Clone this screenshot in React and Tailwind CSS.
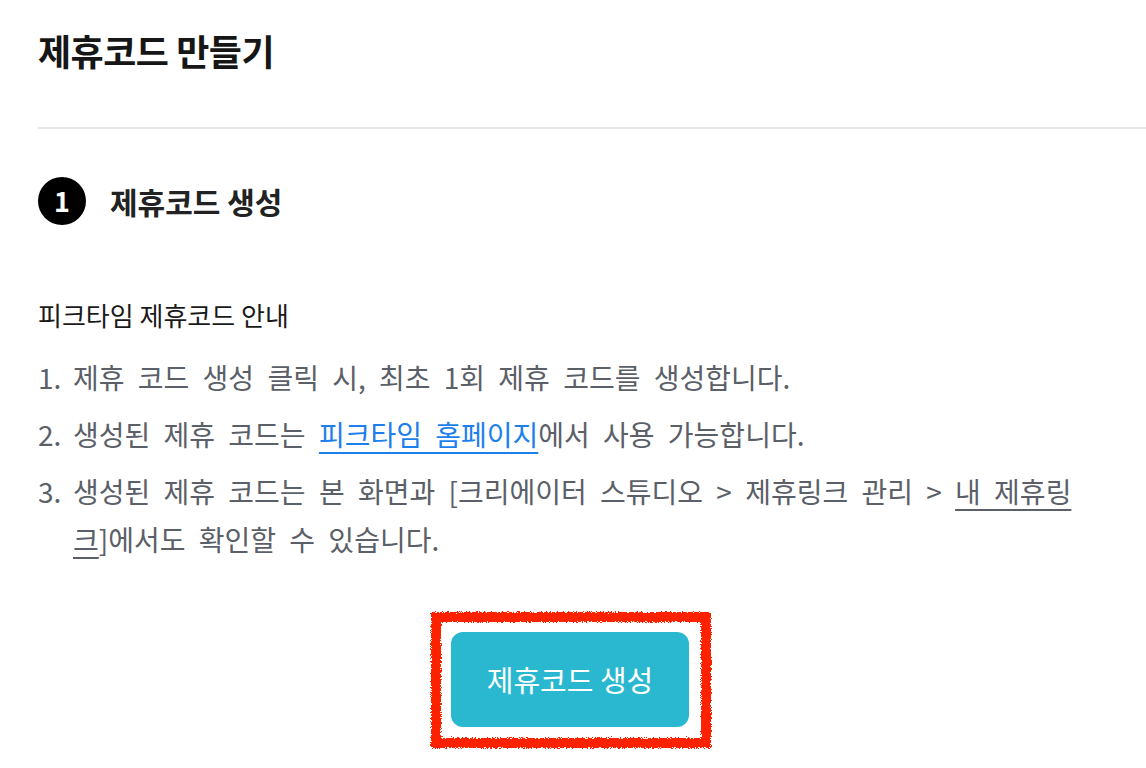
import React from "react";

const FONT = { fontFamily: '"Noto Sans CJK KR", "Noto Sans", sans-serif' };

const GUIDE = [
  {
    n: "1.",
    body: <>제휴 코드 생성 클릭 시, 최초 1회 제휴 코드를 생성합니다.</>,
  },
  {
    n: "2.",
    body: (
      <>
        생성된 제휴 코드는{" "}
        <a href="#" className="text-[#1c7fec] underline decoration-2 underline-offset-[6px]">
          피크타임 홈페이지
        </a>
        에서 사용 가능합니다.
      </>
    ),
  },
  {
    n: "3.",
    body: (
      <>
        생성된 제휴 코드는 본 화면과 [크리에이터 스튜디오 &gt; 제휴링크 관리 &gt;{" "}
        <a href="#" className="underline decoration-2 underline-offset-[6px]">
          내 제휴링
          <br />크
        </a>
        ]에서도 확인할 수 있습니다.
      </>
    ),
  },
];

// 손으로 그린 듯한 빨간 테두리
function ScribbleFrame() {
  return (
    <svg
      className="pointer-events-none absolute -left-[21px] -top-[21px]"
      width="282"
      height="138"
      viewBox="0 0 282 138"
    >
      <defs>
        <filter id="rough" x="-10%" y="-10%" width="120%" height="120%">
          <feTurbulence type="fractalNoise" baseFrequency="1.2" numOctaves="2" seed="5" />
          <feDisplacementMap in="SourceGraphic" scale="5" />
        </filter>
      </defs>
      <rect
        x="6"
        y="6"
        width="270"
        height="126"
        fill="none"
        stroke="#ff2200"
        strokeWidth="10"
        filter="url(#rough)"
      />
    </svg>
  );
}

export default function App() {
  return (
    <div className="min-h-screen bg-white" style={FONT}>
      <div className="pl-[38px]">
        <h1 className="flex h-[100px] items-center text-[36px] font-bold tracking-[-0.5px] text-[#161616]">
          제휴코드 만들기
        </h1>
        <div className="mt-[27px] h-[2px] bg-[#e6e6ea]" />
      </div>

      <div className="px-[38px]">
        <div className="mt-[48px] flex items-center gap-[24px]">
          <span className="flex h-[48px] w-[48px] items-center justify-center rounded-full bg-black text-[27px] font-bold text-white">
            1
          </span>
          <h2 className="text-[30px] font-semibold text-[#222]">제휴코드 생성</h2>
        </div>

        <h3 className="mt-[72px] text-[26px] leading-[36px] font-normal text-[#1a1a1a]">
          피크타임 제휴코드 안내
        </h3>

        <ol className="mt-[20px] flex flex-col gap-[9px] text-[28px] leading-[48px] text-[#5b6068] [word-spacing:7px]">
          {GUIDE.map((item) => (
            <li key={item.n} className="flex">
              <span className="w-[35px] shrink-0">{item.n}</span>
              <span>{item.body}</span>
            </li>
          ))}
        </ol>

        <div className="mt-[69px] flex justify-center pr-[6px]">
          <div className="relative">
            <ScribbleFrame />
            <button className="h-[95px] w-[238px] rounded-[12px] bg-[#29b8d0] text-[29px] font-normal text-white">
              제휴코드 생성
            </button>
          </div>
        </div>
      </div>
    </div>
  );
}
